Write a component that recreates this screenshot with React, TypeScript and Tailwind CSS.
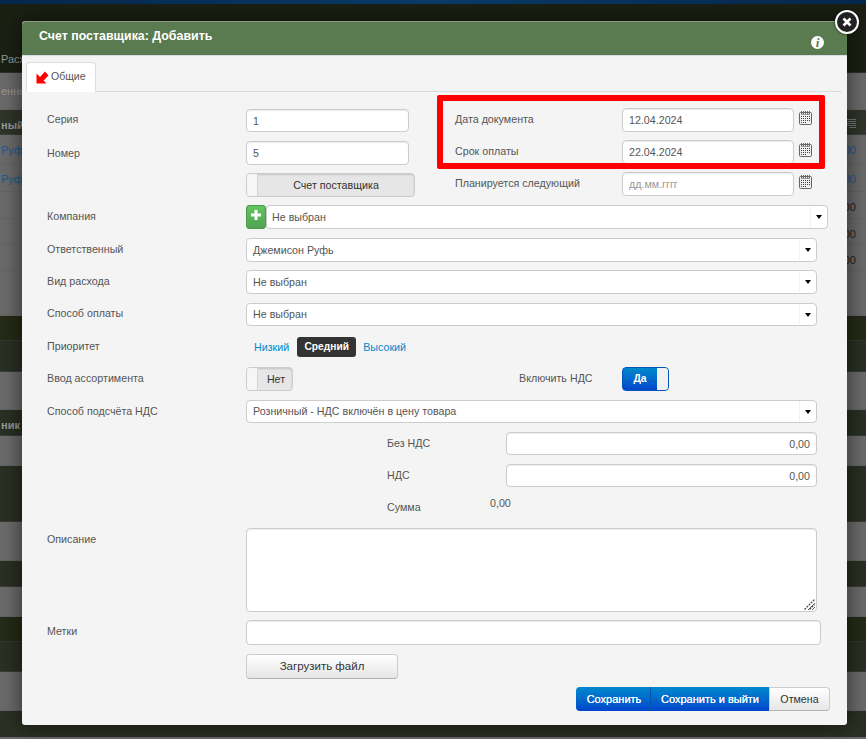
import React from 'react';

const GRAY = 'bg-[#6b6b6b]';
const DARK = 'bg-[#2a3023]';
const OLIVE = 'bg-[#252b17]';

// rows of the page behind the modal
const bgRows: { h: string; bg: string; left?: string; right?: string; blue?: boolean; leftBold?: boolean; pt?: string; icon?: boolean }[] = [
  { h: 'h-[69px]', bg: 'bg-[#1b2013]', left: 'Расходы', pt: 'pt-[47px]' },
  { h: 'h-[37px]', bg: GRAY, left: 'енные', pt: 'pt-[10px]' },
  { h: 'h-[25px]', bg: 'bg-[#30362a]', left: 'ный', leftBold: true, icon: true },
  { h: 'h-[29px]', bg: GRAY, left: 'Руфь', right: '0,00', blue: true },
  { h: 'h-[28px]', bg: GRAY, left: 'Руфь', right: '0,00', blue: true },
  { h: 'h-[27px]', bg: GRAY, right: '0,00' },
  { h: 'h-[26px]', bg: GRAY, right: '0,00' },
  { h: 'h-[26px]', bg: GRAY, right: '0,00' },
  { h: 'h-[45px]', bg: GRAY },
  { h: 'h-[25px]', bg: OLIVE },
  { h: 'h-[31px]', bg: DARK },
  { h: 'h-[38px]', bg: GRAY },
  { h: 'h-[26px]', bg: DARK, left: 'ник', leftBold: true },
  { h: 'h-[30px]', bg: GRAY },
  { h: 'h-[56px]', bg: DARK },
  { h: 'h-[39px]', bg: GRAY },
  { h: 'h-[26px]', bg: DARK },
  { h: 'h-[30px]', bg: GRAY },
  { h: 'h-[25px]', bg: OLIVE },
  { h: 'h-[30px]', bg: DARK },
  { h: 'h-[39px]', bg: GRAY },
];

const CalendarIcon = () => (
  <svg width="13" height="14" viewBox="0 0 13 14" className="shrink-0">
    <rect x="0.5" y="1.5" width="12" height="12" rx="1" fill="#f0f0f0" stroke="#666" />
    <path d="M2 3.5h9" stroke="#999" />
    <path d="M2.5 0v3M4.5 0v3M6.5 0v3M8.5 0v3M10.5 0v3" stroke="#666" />
    <path d="M2 5.5h9M2 7.5h9M2 9.5h9" stroke="#444" strokeDasharray="1 1" />
    <path d="M2 11.5h6" stroke="#444" strokeDasharray="1 1" />
  </svg>
);

const Field = ({ value, placeholder, className = '' }: { value?: string; placeholder?: string; className?: string }) => (
  <input
    readOnly
    value={value}
    placeholder={placeholder}
    className={`bg-white border border-[#cccccc] rounded-[4px] px-[6px] text-[10.7px] text-[#555555] placeholder:text-[#999999] shadow-[inset_0_1px_1px_rgba(0,0,0,0.075)] outline-none ${className}`}
  />
);

const Select = ({ value, className = '' }: { value: string; className?: string }) => (
  <div className={`flex items-center bg-white border border-[#cccccc] rounded-[4px] text-[10.7px] text-[#555555] h-[24px] ${className}`}>
    <span className="flex-1 pl-[6px]">{value}</span>
    <span className="w-[17px] h-full flex items-center justify-center border-l border-[#eef3f8]">
      <span className="border-x-[3.5px] border-x-transparent border-t-[4px] border-t-black" />
    </span>
  </div>
);

const Label = ({ children, className = '' }: { children: React.ReactNode; className?: string }) => (
  <div className={`text-[10.7px] leading-[18px] text-[#555555] ${className}`}>{children}</div>
);

const Row = ({ label, mt, labelPt = 'pt-[2px]', children }: { label: string; mt: string; labelPt?: string; children: React.ReactNode }) => (
  <div className={`flex ${mt}`}>
    <Label className={`w-[199px] shrink-0 ${labelPt}`}>{label}</Label>
    {children}
  </div>
);

const DateRow = ({ label, value, placeholder, mt }: { label: string; value?: string; placeholder?: string; mt: string }) => (
  <div className={`flex ${mt}`}>
    <Label className="w-[167px] shrink-0 pt-[2px]">{label}</Label>
    <Field value={value} placeholder={placeholder} className="w-[172px] h-[24px] mr-[5px]" />
    <div className="pt-[3px]">
      <CalendarIcon />
    </div>
  </div>
);

export default function App() {
  return (
    <div className="relative w-full h-screen overflow-hidden bg-[#6b6b6b] font-['Liberation_Sans',Arial,sans-serif]">
      {/* Page behind the modal */}
      <div className="h-[4px] bg-gradient-to-r from-[#06284f] via-[#0a3c6a] to-[#06284f]" />
      {bgRows.map((row, i) => (
        <div
          key={i}
          className={`${row.h} ${row.bg} flex justify-between pl-[1px] pr-[10px] ${row.pt ?? 'pt-[7px]'} text-[11px] border-b border-[#5a5a5a]/30 ${row.blue ? 'text-[#1c5c8c]' : 'text-[#999999]'}`}
        >
          <span className={row.leftBold ? 'font-bold' : ''}>{row.left}</span>
          {row.icon ? (
            <svg width="10" height="10" viewBox="0 0 10 10" className="mt-[1px]">
              <path d="M0 1.5h10M0 3.5h10M0 5.5h10M0 7.5h10M3 9.5h7" stroke="#777" />
            </svg>
          ) : (
            <span className={row.blue ? '' : 'text-[#222222]'}>{row.right}</span>
          )}
        </div>
      ))}
      <div className="h-[26px] bg-[#2a3023]" />

      {/* Modal */}
      <div className="absolute left-[22px] top-[21px] w-[825px] h-[704px] bg-[#f4f4f4] rounded-[3px] border-t border-[#8a9a84] shadow-[0_0_22px_rgba(0,0,0,0.6)]">
        <div className="h-[34px] bg-[#5a7a4f] border-b border-[#d8dee4] rounded-t-[3px] flex items-center justify-between pl-[17px] pr-[23px]">
          <h1 className="text-[12.4px] font-bold text-white pb-[4px]">Счет поставщика: Добавить</h1>
          <span className="w-[13px] h-[13px] mt-[7px] rounded-full bg-white flex items-center justify-center text-[#5a7a4f] text-[13px] leading-none font-bold italic font-['Liberation_Serif',serif]">
            i
          </span>
        </div>

        {/* Tabs */}
        <div className="mt-[6px] mx-[4px] mr-[5px] h-[30px] border-b border-[#dddddd] flex">
          <div className="w-[70px] h-[30px] bg-white border border-[#dddddd] border-b-white rounded-t-[4px] flex items-center pl-[9px] gap-[2px] text-[10.5px] text-[#555555]">
            <svg width="13" height="13" viewBox="0 0 13 13">
              <path d="M0.5 2.5v10h10l-3-3L12.5 4.5 9 0.5 4 6z" fill="#ff0000" />
            </svg>
            Общие
          </div>
        </div>

        {/* Form */}
        <div className="pl-[25px]">
          <div className="flex">
            <div className="w-[408px] shrink-0">
              <div className="flex mt-[17px]">
                <Label className="w-[199px] pt-[1px]">Серия</Label>
                <Field value="1" className="w-[163px] h-[23px]" />
              </div>
              <div className="flex mt-[9px]">
                <Label className="w-[199px] pt-[3px]">Номер</Label>
                <Field value="5" className="w-[163px] h-[24px]" />
              </div>
              <div className="ml-[199px] mt-[8px] w-[169px] h-[24px] flex rounded-[4px] border border-[#cccccc] bg-[#e6e6e6] shadow-[inset_0_1px_2px_rgba(0,0,0,0.15)] overflow-hidden">
                <span className="w-[11px] bg-[#f6f6f6] border-r border-[#d5d5d5]" />
                <span className="flex-1 text-center text-[10.7px] leading-[22px] text-[#333333]">Счет поставщика</span>
              </div>
            </div>
            <div>
              <DateRow label="Дата документа" value="12.04.2024" mt="mt-[16px]" />
              <DateRow label="Срок оплаты" value="22.04.2024" mt="mt-[8px]" />
              <DateRow label="Планируется следующий" placeholder="дд.мм.гггг" mt="mt-[8px]" />
            </div>
          </div>

          <Row label="Компания" mt="mt-[8px]">
            <button className="w-[20px] h-[24px] rounded-[3px] bg-gradient-to-b from-[#62c462] to-[#51a351] border border-[#4a9a4a] flex justify-center pt-[4px]">
              <svg width="10" height="10" viewBox="0 0 10 10">
                <path d="M3.5 0h3v3.5H10v3H6.5V10h-3V6.5H0v-3h3.5z" fill="#ffffff" />
              </svg>
            </button>
            <Select value="Не выбран" className="w-[562px] [&>span:first-child]:pl-[5px]" />
          </Row>
          <Row label="Ответственный" mt="mt-[9px]">
            <Select value="Джемисон Руфь" className="w-[571px]" />
          </Row>
          <Row label="Вид расхода" mt="mt-[8px]">
            <Select value="Не выбран" className="w-[571px]" />
          </Row>
          <Row label="Способ оплаты" mt="mt-[9px]" labelPt="pt-[1px]">
            <Select value="Не выбран" className="w-[571px] !h-[23px]" />
          </Row>
          <Row label="Приоритет" mt="mt-[11px]" labelPt="pt-0">
            <div className="flex items-center h-[20px] text-[10.7px] text-[#0088cc] pl-[8px]">
              <span>Низкий</span>
              <span className="ml-[8px] w-[59px] h-[20px] rounded-[3px] bg-[#333333] text-white text-[10.2px] font-bold text-center leading-[20px]">Средний</span>
              <span className="ml-[7px]">Высокий</span>
            </div>
          </Row>
          <Row label="Ввод ассортимента" mt="mt-[10px]">
            <div className="w-[47px] h-[24px] flex rounded-[4px] border border-[#cccccc] bg-[#e6e6e6] shadow-[inset_0_1px_2px_rgba(0,0,0,0.15)] overflow-hidden">
              <span className="w-[11px] bg-[#f6f6f6] border-r border-[#d5d5d5]" />
              <span className="flex-1 text-center pl-[2px] text-[10.7px] leading-[22px] text-[#333333]">Нет</span>
            </div>
            <Label className="w-[103px] ml-[226px] pt-[2px]">Включить НДС</Label>
            <div className="w-[47px] h-[24px] flex rounded-[4px] border border-[#0055bb] bg-gradient-to-b from-[#0088cc] to-[#0044cc] overflow-hidden">
              <span className="flex-1 text-center text-[10.4px] font-bold leading-[22px] text-white">Да</span>
              <span className="w-[11px] bg-[#f0f0f0]" />
            </div>
          </Row>
          <Row label="Способ подсчёта НДС" mt="mt-[9px]">
            <Select value="Розничный - НДС включён в цену товара" className="w-[571px] !h-[23px]" />
          </Row>

          <div className="flex mt-[9px] ml-[340px]">
            <Label className="w-[119px] pt-[2px]">Без НДС</Label>
            <Field value="0,00" className="w-[311px] h-[23px] text-right" />
          </div>
          <div className="flex mt-[9px] ml-[340px]">
            <Label className="w-[119px] pt-[2px]">НДС</Label>
            <Field value="0,00" className="w-[311px] h-[23px] text-right" />
          </div>
          <div className="flex mt-[10px] ml-[340px] h-[31px]">
            <Label className="w-[103px] pt-[1px]">Сумма</Label>
            <Label className="-mt-[3px]">0,00</Label>
          </div>

          <Row label="Описание" mt="mt-0">
            <div className="relative">
              <textarea readOnly className="w-[571px] h-[84px] block bg-white border border-[#cccccc] rounded-[4px] shadow-[inset_0_1px_1px_rgba(0,0,0,0.075)] outline-none" />
              <svg width="11" height="11" viewBox="0 0 11 11" className="absolute right-[2px] bottom-[2px] pointer-events-none">
                <path d="M0.5 10.5l10-10M5.5 10.5l5-5" stroke="#444" strokeWidth="1.2" strokeDasharray="2 1" />
              </svg>
            </div>
          </Row>
          <Row label="Метки" mt="mt-[8px]">
            <Field className="w-[575px] h-[25px]" />
          </Row>
          <button className="block ml-[199px] mt-[9px] w-[152px] h-[25px] rounded-[4px] border border-[#cccccc] border-b-[#b3b3b3] bg-gradient-to-b from-white to-[#e6e6e6] text-[11.5px] text-[#333333]">
            Загрузить файл
          </button>

          {/* Footer buttons */}
          <div className="flex justify-end mr-[17px] mt-[8px] h-[24px] text-[11px]">
            <button className="w-[75px] pl-[2px] rounded-l-[4px] bg-gradient-to-b from-[#0088cc] to-[#0044cc] border-r border-[#0055aa] text-white [text-shadow:0_0_0.6px_#ffffff]">Сохранить</button>
            <button className="w-[118px] bg-gradient-to-b from-[#0088cc] to-[#0044cc] text-white [text-shadow:0_0_0.6px_#ffffff]">Сохранить и выйти</button>
            <button className="w-[61px] rounded-r-[4px] border border-[#cccccc] border-b-[#b3b3b3] bg-gradient-to-b from-white to-[#e6e6e6] text-[10.7px] text-[#333333]">Отмена</button>
          </div>
        </div>

        {/* Red highlight drawn over the date fields */}
        <div className="absolute left-[415px] top-[73px] w-[388px] h-[74px] border-[6px] border-[#ff0000] rounded-[2px]" />

        {/* Close button */}
        <button className="absolute left-[813px] top-[-12px] w-[24px] h-[24px] rounded-full bg-[#222222] border-2 border-white flex items-center justify-center shadow-[0_0_3px_rgba(0,0,0,0.6)]">
          <svg width="10" height="10" viewBox="0 0 10 10">
            <path d="M1.5 1.5l7 7M8.5 1.5l-7 7" stroke="white" strokeWidth="2.6" />
          </svg>
        </button>
      </div>
    </div>
  );
}
